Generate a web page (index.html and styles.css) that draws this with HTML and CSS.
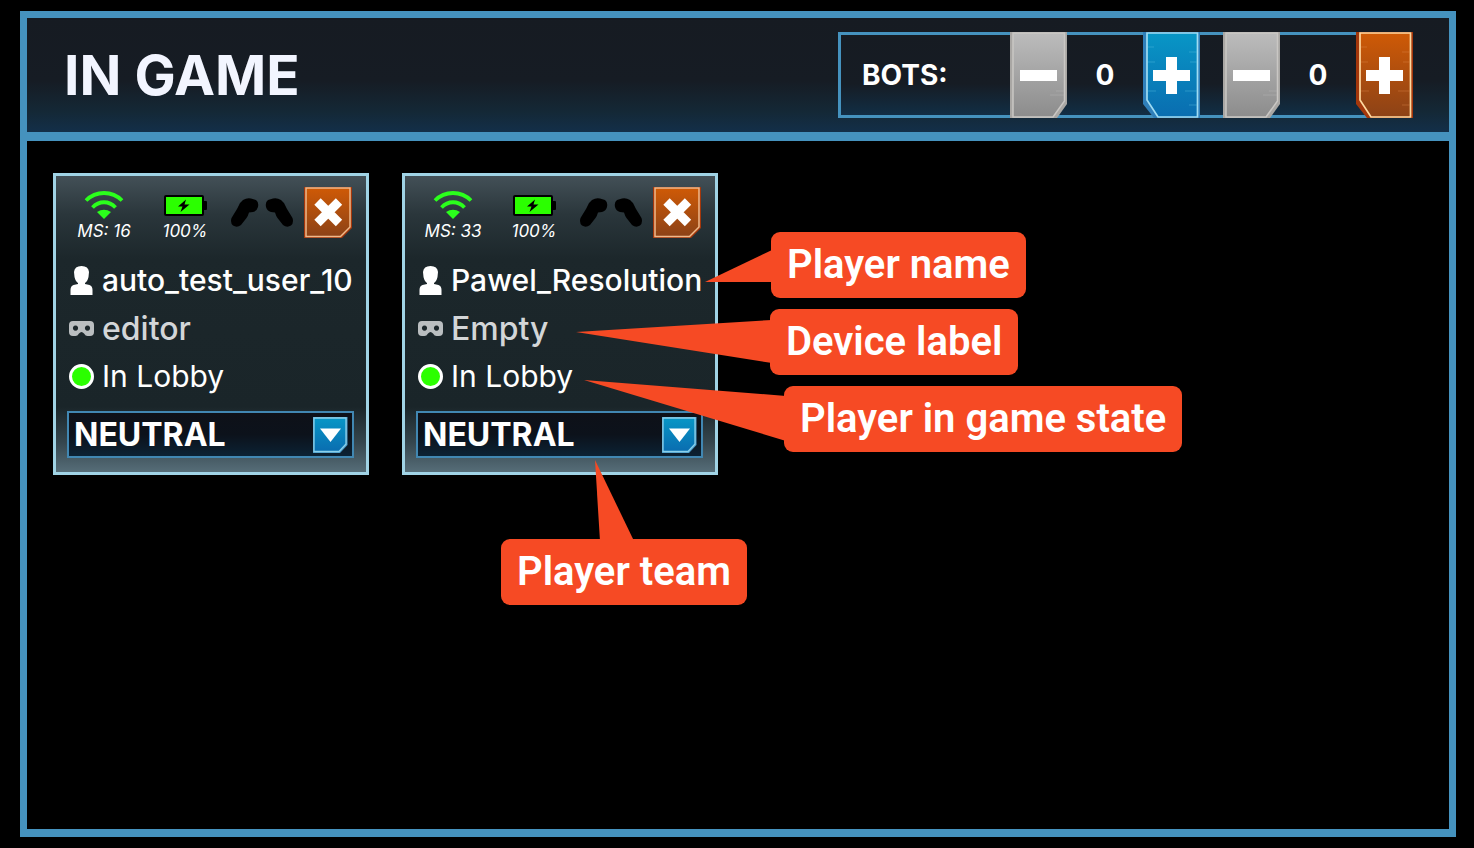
FILE: index.html
```html
<!DOCTYPE html>
<html lang="en">
<head>
    <meta charset="UTF-8">
    <title>In game</title>
    <link rel="stylesheet" href="styles.css">
</head>
<body>

    <!-- shared icons -->
    <svg class="sprite" aria-hidden="true">
        <defs>
            <linearGradient id="grey" x1="0" y1="0" x2="0" y2="1">
                <stop offset="0" stop-color="#bcbcbc"/>
                <stop offset="1" stop-color="#8c8c8c"/>
            </linearGradient>
            <linearGradient id="blue" x1="0" y1="0" x2="0" y2="1">
                <stop offset="0" stop-color="#0896c6"/>
                <stop offset="1" stop-color="#0a6db0"/>
            </linearGradient>
            <linearGradient id="orange" x1="0" y1="0" x2="0" y2="1">
                <stop offset="0" stop-color="#cf5a06"/>
                <stop offset="1" stop-color="#8c4217"/>
            </linearGradient>
            <symbol id="minus" viewBox="0 0 57 86">
                <path d="M0 0H57V72L47 86H0Z" fill="#a9a7a4"/>
                <path d="M3 1H54.500V69L43 85H3Z" fill="url(#grey)" stroke="#c9c7c4" stroke-width="1.500"/>
                <path d="M46 59h8M40 63h14" stroke="#bbb" opacity=".4"/>
                <path d="M10 38H47V49H10Z" fill="#fff"/>
            </symbol>
            <symbol id="plus-blue" viewBox="0 0 57 86">
                <path d="M0 0H57V86H11L0 72Z" fill="#2f7fba"/>
                <path d="M4 1H54.500V85H15L4 68Z" fill="url(#blue)" stroke="#9fdcf3" stroke-width="1.700"/>
                <path d="M5 15h6M5 30h7M5 59h8M46 20h8M47 30h7M42 59h12M46 73h8" stroke="#5cc0e2" opacity=".4"/>
                <path d="M10 38H23V25H34V38H47V49H34V62H23V49H10Z" fill="#fff"/>
            </symbol>
            <symbol id="plus-orange" viewBox="0 0 57 86">
                <path d="M0 0H57V86H11L0 72Z" fill="#a4370b"/>
                <path d="M4 1H54.500V85H15L4 68Z" fill="url(#orange)" stroke="#ffd9a0" stroke-width="1.700"/>
                <path d="M5 15h6M5 30h7M5 59h8M46 20h8M47 30h7M42 59h12M46 73h8" stroke="#e08a4c" opacity=".4"/>
                <path d="M10 38H23V25H34V38H47V49H34V62H23V49H10Z" fill="#fff"/>
            </symbol>
            <symbol id="close" viewBox="0 0 48 51">
                <path d="M0 0H48V41L38 51H0Z" fill="#a4370b"/>
                <path d="M2 1H46V40L36.500 49.500H2Z" fill="url(#orange)" stroke="#f0b98a" stroke-width="1.500"/>
                <path d="M13.500 14.500L35 36M35 14.500L13.500 36" stroke="#fff" stroke-width="9"/>
            </symbol>
            <symbol id="wifi" viewBox="0 0 40 28">
                <path d="M2 9.500C12 -.5 28 -.5 38 9.500M8.500 16.500C15 9.500 25 9.500 31.500 16.500" fill="none" stroke="#2bff1c" stroke-width="3.800"/>
                <path d="M13 21Q20 16.500 27 21L20 28Z" fill="#2bff1c"/>
            </symbol>
            <symbol id="battery" viewBox="0 0 43 21">
                <rect width="40" height="21" rx="2"/>
                <rect x="39" y="6" width="4" height="9" rx="1"/>
                <rect x="2" y="2" width="36" height="17" fill="#2bff00"/>
                <path d="M22 4.500L14 11.500H18.500L16.500 17L25.500 9.500H20.500Z"/>
            </symbol>
            <symbol id="controllers" viewBox="0 0 62 29">
                <path id="pad" d="M9 5L12 2Q16 -.5 20 .5L25 2Q28 4 27 9Q26 13 22 14L18 14.500Q17 18 15.500 20L10 27Q6 30 2 27.500Q-1 25 .5 20L6 11Z"/>
                <use href="#pad" transform="translate(62 0) scale(-1 1)"/>
            </symbol>
            <symbol id="user" viewBox="0 0 25 29">
                <path d="M5 6Q5.500 0 12.500 0Q19.500 0 20 6L19.500 11Q18.500 15.500 16 17V18L20.500 19Q23.500 20 23.500 24V29H1.500V24Q1.500 20 4.500 19L9 18V17Q6.500 15.500 5.500 11Z" fill="#fff"/>
            </symbol>
            <symbol id="headset" viewBox="0 0 25 15">
                <path fill-rule="evenodd" d="M4 0H21Q25 0 25 4V11Q25 15 21 15H18.500Q16.500 15 15 12.500Q12.500 9.500 10 12.500Q8.500 15 6.500 15H4Q0 15 0 11V4Q0 0 4 0ZM6.500 4.500a2.600 2.600 0 1 0 .01 0ZM18.500 4.500a2.600 2.600 0 1 0 .01 0Z" fill="#babec0"/>
            </symbol>
            <symbol id="arrow" viewBox="0 0 36 36">
                <path d="M0 0H34.500V28L27 36H0Z" fill="#4a9ccb"/>
                <path d="M1 1H33V27L26 34.500H1Z" fill="url(#blue)" stroke="#8ad0ea" stroke-width="1.300"/>
                <path d="M7 11.500H28L17.500 25Z" fill="#fff"/>
            </symbol>
        </defs>
    </svg>

    <div class="panel">
        <header class="header">
            <h1 class="title">IN GAME</h1>
            <div class="bots">
                <span class="bots_label">BOTS:</span>
                <div class="counter">
                    <button class="step" type="button" aria-label="Remove blue bot"><svg><use href="#minus"/></svg></button>
                    <span class="count">0</span>
                    <button class="step" type="button" aria-label="Add blue bot"><svg><use href="#plus-blue"/></svg></button>
                </div>
                <div class="counter">
                    <button class="step" type="button" aria-label="Remove orange bot"><svg><use href="#minus"/></svg></button>
                    <span class="count">0</span>
                    <button class="step" type="button" aria-label="Add orange bot"><svg><use href="#plus-orange"/></svg></button>
                </div>
            </div>
        </header>

        <main class="players">
            <div class="player">
                <section class="card">
                    <div class="status">
                        <div class="stat">
                            <svg class="icon_wifi"><use href="#wifi"/></svg>
                            <span>MS: 16</span>
                        </div>
                        <div class="stat">
                            <svg class="icon_battery"><use href="#battery"/></svg>
                            <span>100%</span>
                        </div>
                        <svg class="icon_controllers"><use href="#controllers"/></svg>
                        <button class="close" type="button" aria-label="Remove player"><svg><use href="#close"/></svg></button>
                    </div>
                    <div class="row name">
                        <svg class="icon_user"><use href="#user"/></svg>
                        <span>auto_test_user_10</span>
                    </div>
                    <div class="row device">
                        <svg class="icon_headset"><use href="#headset"/></svg>
                        <span>editor</span>
                    </div>
                    <div class="row state">
                        <span class="dot"></span>
                        <span>In Lobby</span>
                    </div>
                    <div class="team">
                        <select aria-label="Team">
                            <option>NEUTRAL</option>
                        </select>
                        <svg class="team_arrow"><use href="#arrow"/></svg>
                    </div>
                </section>
            </div>

            <div class="player">
                <section class="card">
                    <div class="status">
                        <div class="stat">
                            <svg class="icon_wifi"><use href="#wifi"/></svg>
                            <span>MS: 33</span>
                        </div>
                        <div class="stat">
                            <svg class="icon_battery"><use href="#battery"/></svg>
                            <span>100%</span>
                        </div>
                        <svg class="icon_controllers"><use href="#controllers"/></svg>
                        <button class="close" type="button" aria-label="Remove player"><svg><use href="#close"/></svg></button>
                    </div>
                    <div class="row name">
                        <svg class="icon_user"><use href="#user"/></svg>
                        <span>Pawel_Resolution</span>
                    </div>
                    <div class="row device">
                        <svg class="icon_headset"><use href="#headset"/></svg>
                        <span>Empty</span>
                    </div>
                    <div class="row state">
                        <span class="dot"></span>
                        <span>In Lobby</span>
                    </div>
                    <div class="team">
                        <select aria-label="Team">
                            <option>NEUTRAL</option>
                        </select>
                        <svg class="team_arrow"><use href="#arrow"/></svg>
                    </div>
                </section>

                <!-- callouts over the card -->
                <svg class="tails" aria-hidden="true">
                    <polygon points="303,109 370,77 370,109"/>
                    <polygon points="174,159 370,147 370,190"/>
                    <polygon points="182,207 384,223 384,268"/>
                    <polygon points="193,287 198,368 232,368"/>
                </svg>
                <div class="callout callout_name">Player name</div>
                <div class="callout callout_device">Device label</div>
                <div class="callout callout_state">Player in game state</div>
                <div class="callout callout_team">Player team</div>
            </div>
        </main>
    </div>

</body>
</html>
```
FILE: styles.css
```css
* {
    padding: 0;
    margin: 0;
    box-sizing: border-box;
}
body {
    padding: 11px 18px 11px 20px;
    background-color: #000;
    color: #fff;
    font-family: Inter, "Liberation Sans", sans-serif;
}
svg {
    display: block;
    flex-shrink: 0;
}
button {
    border: 0;
    background: none;
    cursor: pointer;
}
.sprite {
    position: absolute;
    width: 0;
    height: 0;
}

.panel {
    min-height: calc(100vh - 22px);
    border: 7px solid #4592be;
    border-bottom-width: 8px;
}

/* header */
.header {
    display: flex;
    justify-content: space-between;
    align-items: center;
    padding: 14px 36px 14px 37px;
    border-bottom: 9px solid #4592be;
    background: linear-gradient(#161b22 0%, #161c24 55%, #142836 82%, #132f49 100%);
}
.title {
    font-size: 55px;
    line-height: 64px;
    font-weight: 700;
    color: #f2f5ff;
}
.bots {
    display: flex;
    align-items: center;
    gap: 23px;
    height: 86px;
    padding-left: 24px;
    box-shadow: inset 0 0 0 3px #4592be;
    background: linear-gradient(#161b22 0%, #161c24 60%, #122b3f 90%, #132f49 100%);
}
.bots_label {
    width: 125px;
    font-size: 28px;
    font-weight: 700;
}
.counter {
    display: flex;
    align-items: center;
}
.step,
.step svg {
    width: 57px;
    height: 86px;
}
.count {
    width: 76px;
    text-align: center;
    font-size: 28px;
    font-weight: 700;
}

/* player cards */
.players {
    display: flex;
    flex-wrap: wrap;
    gap: 33px;
    padding: 32px 26px;
}
.player {
    position: relative;
}
.card {
    width: 316px;
    padding: 11px 12px 14px 11px;
    border: 3px solid #a0d3e5;
    background: linear-gradient(#435057 0%, #2a363b 13%, #1c272b 28%, #1a2529 78%, #35464e 90%, #566d78 100%);
}
.status {
    display: flex;
    justify-content: space-between;
    align-items: flex-start;
    margin-bottom: 15px;
    padding: 0 2px;
}
.stat {
    display: flex;
    flex-direction: column;
    align-items: center;
    width: 70px;
    padding-top: 4px;
    font-size: 17px;
    line-height: 20px;
    font-style: italic;
}
.icon_wifi {
    width: 40px;
    height: 28px;
    margin-bottom: 2px;
}
.icon_battery {
    width: 43px;
    height: 21px;
    margin: 4px 0 5px;
}
.icon_controllers {
    width: 62px;
    height: 29px;
    margin-top: 11px;
}
.close,
.close svg {
    width: 48px;
    height: 51px;
}
.row {
    display: flex;
    align-items: center;
    gap: 8px;
    height: 48px;
    padding-left: 2px;
    font-size: 30px;
    white-space: nowrap;
}
.name {
    font-weight: 500;
}
.device {
    color: #d3d6d8;
    font-size: 32px;
    font-weight: 500;
}
.icon_user {
    width: 25px;
    height: 29px;
}
.icon_headset {
    width: 25px;
    height: 15px;
}
.dot {
    width: 25px;
    height: 25px;
    border: 3px solid #fff;
    border-radius: 50%;
    background-color: #2bff00;
}
.team {
    position: relative;
    margin-top: 11px;
}
.team select {
    display: block;
    width: 100%;
    height: 47px;
    padding-left: 5px;
    border: 2px solid #4187b2;
    border-radius: 0;
    appearance: none;
    background: linear-gradient(#0e1118 0%, #0c121b 50%, #0c2234 100%);
    color: #fff;
    font-family: inherit;
    font-size: 32px;
    font-weight: 700;
}
.team_arrow {
    position: absolute;
    top: 6px;
    right: 5px;
    width: 36px;
    height: 36px;
    pointer-events: none;
}

/* callouts */
.tails {
    position: absolute;
    top: 0;
    left: 0;
    width: 400px;
    height: 400px;
    fill: #f64a24;
    pointer-events: none;
}
.callout {
    position: absolute;
    padding: 0 16px;
    border-radius: 9px;
    background-color: #f64a24;
    font-family: Roboto, "Liberation Sans", sans-serif;
    font-size: 40px;
    line-height: 66px;
    font-weight: 600;
    white-space: nowrap;
}
.callout_name {
    top: 59px;
    left: 369px;
}
.callout_device {
    top: 136px;
    left: 368px;
}
.callout_state {
    top: 213px;
    left: 382px;
}
.callout_team {
    top: 366px;
    left: 99px;
}
```
